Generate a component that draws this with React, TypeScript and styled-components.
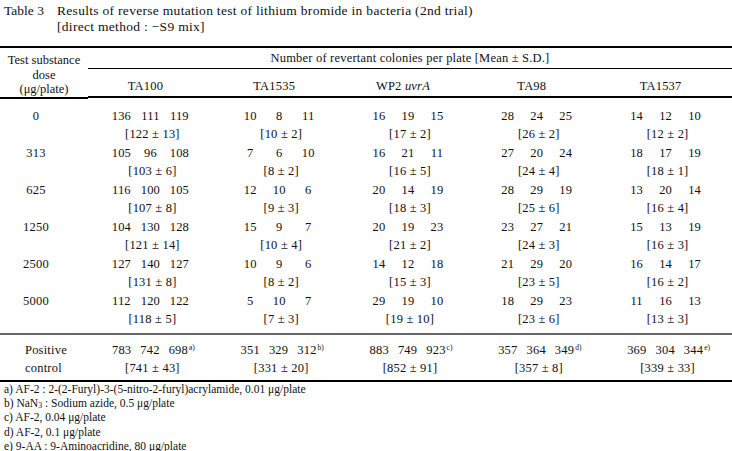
import React from "react";
import styled, { createGlobalStyle } from "styled-components";

const Global = createGlobalStyle`
  html, body { margin: 0; padding: 0; background: #fff; }
  body { font-family: "Liberation Serif", "Times New Roman", serif; color: #111; }
`;

const Page = styled.div`
  width: 732px;
  height: 451px;
  overflow: hidden;
`;

const Caption = styled.div`
  display: grid;
  grid-template-columns: 53px auto;
  align-content: start;
  padding: 3px 0 0 4px;
  font-size: 13.5px;
  letter-spacing: 0.3px;
  line-height: 16px;
  height: 46px;
  box-sizing: border-box;
`;

const CaptionLabel = styled.span`
  letter-spacing: 0;
`;
const CaptionText = styled.span``;

const Table = styled.div`
  display: grid;
  grid-template-columns: 88px repeat(5, 1fr);
  border-top: 2px solid #000;
  border-bottom: 2px solid #000;
  font-size: 12.5px;
  letter-spacing: 0.2px;
`;

const DoseHead = styled.div`
  grid-row: span 2;
  display: flex;
  flex-direction: column;
  align-items: center;
  padding-top: 5px;
  line-height: 14.5px;
  border-bottom: 2px solid #000;
  letter-spacing: 0;
`;

const GroupHead = styled.div`
  grid-column: span 5;
  text-align: center;
  padding: 3px 0 0;
  height: 21px;
  box-sizing: border-box;
  border-bottom: 1px solid #000;
`;

const StrainHead = styled.div`
  text-align: center;
  padding: 9px 14px 0 0;
  height: 28px;
  box-sizing: border-box;
  border-bottom: 2px solid #000;
`;

const Italic = styled.i``;

const Body = styled.div<{ $last?: boolean }>`
  grid-column: 1 / -1;
  display: grid;
  grid-template-columns: 88px repeat(5, 1fr);
  padding: ${(p) => (p.$last ? "6px 0 2px" : "8px 0 4px")};
  border-top: ${(p) => (p.$last ? "2px solid #666" : "none")};
`;

const DoseCell = styled.div<{ $left?: boolean }>`
  display: flex;
  flex-direction: column;
  align-items: ${(p) => (p.$left ? "flex-start" : "center")};
  padding: ${(p) => (p.$left ? "0 0 0 25px" : "0 16px 0 0")};
  line-height: 18.5px;
`;

const DataCell = styled.div`
  display: flex;
  flex-direction: column;
  align-items: center;
  line-height: 18.5px;
`;

const Triple = styled.div`
  display: grid;
  grid-template-columns: repeat(3, 29px);
  justify-items: center;
  margin-left: -4px;
`;

const PosTriple = styled.div`
  display: flex;
  gap: 9px;
  margin-left: 2px;
`;

const Val = styled.span``;

const Sup = styled.sup`
  font-size: 7.5px;
  vertical-align: 4px;
  line-height: 0;
  margin-left: 1px;
  letter-spacing: 0;
`;

const Sub = styled.sub`
  font-size: 8px;
  line-height: 0;
  vertical-align: -1px;
`;

const Mean = styled.span``;

const Notes = styled.div`
  padding: 0 0 0 4px;
  font-size: 11.5px;
  line-height: 14.4px;
`;

const Note = styled.div``;

type Cell = { v: [number, number, number]; m: string; sup?: string };

const doses: { dose: string; cells: Cell[] }[] = [
  { dose: "0", cells: [
    { v: [136, 111, 119], m: "[122 ± 13]" },
    { v: [10, 8, 11], m: "[10 ± 2]" },
    { v: [16, 19, 15], m: "[17 ± 2]" },
    { v: [28, 24, 25], m: "[26 ± 2]" },
    { v: [14, 12, 10], m: "[12 ± 2]" },
  ] },
  { dose: "313", cells: [
    { v: [105, 96, 108], m: "[103 ± 6]" },
    { v: [7, 6, 10], m: "[8 ± 2]" },
    { v: [16, 21, 11], m: "[16 ± 5]" },
    { v: [27, 20, 24], m: "[24 ± 4]" },
    { v: [18, 17, 19], m: "[18 ± 1]" },
  ] },
  { dose: "625", cells: [
    { v: [116, 100, 105], m: "[107 ± 8]" },
    { v: [12, 10, 6], m: "[9 ± 3]" },
    { v: [20, 14, 19], m: "[18 ± 3]" },
    { v: [28, 29, 19], m: "[25 ± 6]" },
    { v: [13, 20, 14], m: "[16 ± 4]" },
  ] },
  { dose: "1250", cells: [
    { v: [104, 130, 128], m: "[121 ± 14]" },
    { v: [15, 9, 7], m: "[10 ± 4]" },
    { v: [20, 19, 23], m: "[21 ± 2]" },
    { v: [23, 27, 21], m: "[24 ± 3]" },
    { v: [15, 13, 19], m: "[16 ± 3]" },
  ] },
  { dose: "2500", cells: [
    { v: [127, 140, 127], m: "[131 ± 8]" },
    { v: [10, 9, 6], m: "[8 ± 2]" },
    { v: [14, 12, 18], m: "[15 ± 3]" },
    { v: [21, 29, 20], m: "[23 ± 5]" },
    { v: [16, 14, 17], m: "[16 ± 2]" },
  ] },
  { dose: "5000", cells: [
    { v: [112, 120, 122], m: "[118 ± 5]" },
    { v: [5, 10, 7], m: "[7 ± 3]" },
    { v: [29, 19, 10], m: "[19 ± 10]" },
    { v: [18, 29, 23], m: "[23 ± 6]" },
    { v: [11, 16, 13], m: "[13 ± 3]" },
  ] },
];

const positive: Cell[] = [
  { v: [783, 742, 698], m: "[741 ± 43]", sup: "a)" },
  { v: [351, 329, 312], m: "[331 ± 20]", sup: "b)" },
  { v: [883, 749, 923], m: "[852 ± 91]", sup: "c)" },
  { v: [357, 364, 349], m: "[357 ± 8]", sup: "d)" },
  { v: [369, 304, 344], m: "[339 ± 33]", sup: "e)" },
];

const strains = ["TA100", "TA1535", "WP2", "TA98", "TA1537"];

export default function App() {
  return (
    <Page>
      <Global />
      <Caption>
        <CaptionLabel>Table 3</CaptionLabel>
        <CaptionText>Results of reverse mutation test of lithium bromide in bacteria (2nd trial)</CaptionText>
        <span />
        <CaptionText>[direct method : −S9 mix]</CaptionText>
      </Caption>
      <Table>
        <DoseHead>
          <span>Test substance</span>
          <span>dose</span>
          <span>(μg/plate)</span>
        </DoseHead>
        <GroupHead>Number of revertant colonies per plate [Mean ± S.D.]</GroupHead>
        {strains.map((s) => (
          <StrainHead key={s}>
            {s === "WP2" ? (
              <>
                WP2 <Italic>uvrA</Italic>
              </>
            ) : (
              s
            )}
          </StrainHead>
        ))}
        <Body>
          <DoseCell>
            {doses.map((d) => (
              <React.Fragment key={d.dose}>
                <span>{d.dose}</span>
                <span>&nbsp;</span>
              </React.Fragment>
            ))}
          </DoseCell>
          {strains.map((s, i) => (
            <DataCell key={s}>
              {doses.map((d) => (
                <React.Fragment key={d.dose}>
                  <Triple>
                    {d.cells[i].v.map((n, k) => (
                      <Val key={k}>{n}</Val>
                    ))}
                  </Triple>
                  <Mean>{d.cells[i].m}</Mean>
                </React.Fragment>
              ))}
            </DataCell>
          ))}
        </Body>
        <Body $last>
          <DoseCell $left>
            <span>Positive</span>
            <span>control</span>
          </DoseCell>
          {positive.map((c, i) => (
            <DataCell key={i}>
              <PosTriple>
                <Val>{c.v[0]}</Val>
                <Val>{c.v[1]}</Val>
                <Val>
                  {c.v[2]}
                  <Sup>{c.sup}</Sup>
                </Val>
              </PosTriple>
              <Mean>{c.m}</Mean>
            </DataCell>
          ))}
        </Body>
      </Table>
      <Notes>
        <Note>a) AF-2 : 2-(2-Furyl)-3-(5-nitro-2-furyl)acrylamide, 0.01 μg/plate</Note>
        <Note>b) NaN<Sub>3</Sub> : Sodium azide, 0.5 μg/plate</Note>
        <Note>c) AF-2, 0.04 μg/plate</Note>
        <Note>d) AF-2, 0.1 μg/plate</Note>
        <Note>e) 9-AA : 9-Aminoacridine, 80 μg/plate</Note>
      </Notes>
    </Page>
  );
}
